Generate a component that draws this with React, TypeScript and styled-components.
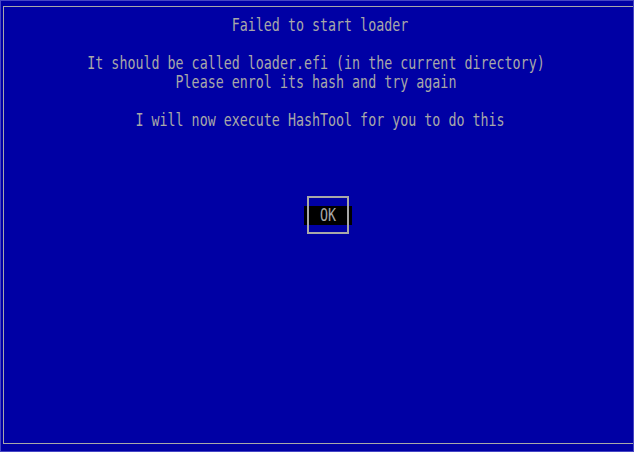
import React from "react";
import styled, { createGlobalStyle } from "styled-components";

const BLUE = "#0000a4";
const GRAY = "#a8a8a8";

const GlobalStyle = createGlobalStyle`
  html, body {
    margin: 0;
    padding: 0;
    background: ${BLUE};
  }
  * { box-sizing: border-box; }
`;

const Screen = styled.div`
  width: 634px;
  height: 452px;
  background: ${BLUE};
  border: 1px solid #4646c4;
  overflow: hidden;
`;

const Frame = styled.div`
  margin: 5px 0 0 2px;
  width: 660px;
  height: 438px;
  border: 1px solid ${GRAY};
  padding-top: 9px;
`;

const TextColumn = styled.div`
  width: 632px;
  display: flex;
  flex-direction: column;
`;

const Line = styled.div<{ $odd?: boolean }>`
  height: 19px;
  line-height: 19px;
  text-align: center;
  white-space: pre;
  padding-right: ${(p) => (p.$odd ? "8px" : "0")};
  font-family: "DejaVu Sans Mono", "Liberation Mono", monospace;
  font-size: 13.33px;
  color: ${GRAY};
  transform: scaleY(1.3);
`;

const Spacer = styled.div<{ $rows: number }>`
  height: ${(p) => p.$rows * 19}px;
`;

const ButtonRow = styled.div`
  display: flex;
  justify-content: center;
  padding-left: 16px;
`;

const OkButton = styled.div`
  position: relative;
  width: 48px;
  height: 19px;
  background: #000;
  color: ${GRAY};
  font-family: "DejaVu Sans Mono", "Liberation Mono", monospace;
  font-size: 13.33px;
  line-height: 19px;
  text-align: center;

  span {
    display: inline-block;
    transform: scaleY(1.3);
  }

  &::after {
    content: "";
    position: absolute;
    left: 3px;
    right: 3px;
    top: -10px;
    bottom: -9px;
    border: 2px solid ${GRAY};
  }
`;

const lines = [
  "Failed to start loader",
  "",
  "It should be called loader.efi (in the current directory)",
  "Please enrol its hash and try again",
  "",
  "I will now execute HashTool for you to do this",
];

export default function App() {
  return (
    <>
      <GlobalStyle />
      <Screen>
        <Frame>
          <TextColumn>
            {lines.map((t, i) => (
              <Line key={i} $odd={t.length % 2 === 1}>
                {t}
              </Line>
            ))}
            <Spacer $rows={4} />
            <ButtonRow>
              <OkButton>
                <span>OK</span>
              </OkButton>
            </ButtonRow>
          </TextColumn>
        </Frame>
      </Screen>
    </>
  );
}
